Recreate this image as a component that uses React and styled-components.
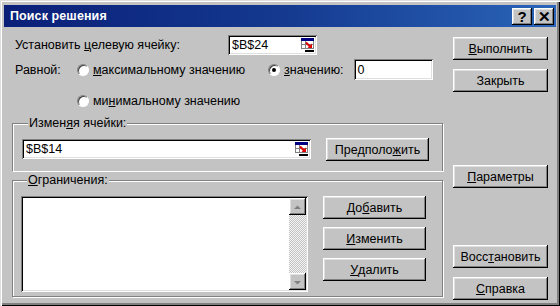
import React from 'react';
import styled, { createGlobalStyle } from 'styled-components';

const GlobalStyle = createGlobalStyle`
  html, body { margin: 0; padding: 0; background: #c0c0c0; }
  body {
    font-family: "Liberation Sans", Arial, sans-serif;
    font-size: 12.5px;
    color: #000;
  }
`;

const raised = `
  box-shadow: inset -1px -1px 0 #000, inset 1px 1px 0 #fff,
    inset -2px -2px 0 #808080, inset 2px 2px 0 #dfdfdf;
`;

const sunken = `
  box-shadow: inset 1px 1px 0 #808080, inset -1px -1px 0 #fff,
    inset 2px 2px 0 #000, inset -2px -2px 0 #dfdfdf;
`;

const Window = styled.div`
  width: 560px;
  height: 306px;
  box-sizing: border-box;
  background: #c3c3c3;
  padding: 5px 4px 0 4px;
  box-shadow: inset 1px 1px 0 #dfdfdf, inset 2px 2px 0 #fff,
    inset -1px -1px 0 #000, inset -3px -3px 0 #808080;
  display: flex;
  flex-direction: column;
`;

const TitleBar = styled.div`
  height: 22px;
  flex: none;
  display: flex;
  align-items: center;
  justify-content: space-between;
  padding: 0 2px 0 6px;
  background: linear-gradient(90deg, #0a1f78 0%, #14398f 50%, #2a64b8 100%);
`;

const Title = styled.span`
  color: #fff;
  font-weight: bold;
  font-size: 12.5px;
  letter-spacing: 0.1px;
`;

const TitleButtons = styled.div`
  display: flex;
  gap: 2px;
`;

const TitleButton = styled.div`
  width: 20px;
  height: 17px;
  background: #c3c3c3;
  ${raised}
  display: flex;
  align-items: center;
  justify-content: center;
  font-weight: bold;
  font-size: 15px;
  line-height: 1;
`;

const Body = styled.div`
  flex: 1;
  display: flex;
  padding: 8px 8px 0 8px;
`;

const LeftCol = styled.div`
  width: 431px;
  display: flex;
  flex-direction: column;
`;

const RightCol = styled.div`
  width: 95px;
  margin-left: 10px;
  padding-top: 2px;
  display: flex;
  flex-direction: column;
`;

const Row = styled.div`
  display: flex;
  align-items: center;
  height: ${p => p.$h || 20}px;
  margin-top: ${p => p.$mt || 0}px;
  padding-left: ${p => p.$pl || 0}px;
`;

const Label = styled.span`
  width: ${p => p.$w}px;
  padding-left: 3px;
  box-sizing: border-box;
  flex: none;
  white-space: nowrap;
`;

const TextBox = styled.div`
  width: ${p => p.$w}px;
  height: ${p => p.$h || 20}px;
  margin-left: ${p => p.$ml || 0}px;
  box-sizing: border-box;
  background: #fff;
  ${sunken}
  display: flex;
  align-items: center;
  justify-content: space-between;
  padding: 0 3px 0 4px;
  flex: none;
`;

const RadioOpt = styled.label`
  display: flex;
  align-items: center;
  gap: 4px;
  width: ${p => (p.$w ? `${p.$w}px` : 'auto')};
  flex: none;
  white-space: nowrap;
`;

const RadioDot = styled.span`
  width: 12px;
  height: 12px;
  border-radius: 50%;
  box-sizing: border-box;
  background: #fff;
  border: 1px solid;
  border-color: #808080 #fff #fff #808080;
  box-shadow: inset 1px 1px 0 #404040;
  display: flex;
  align-items: center;
  justify-content: center;
  &::after {
    content: '';
    width: 4px;
    height: 4px;
    border-radius: 50%;
    background: ${p => (p.$on ? '#000' : 'transparent')};
  }
`;

const Group = styled.fieldset`
  margin: ${p => p.$mt}px 0 0 0;
  padding: ${p => p.$pad};
  border: 1px solid #808080;
  border-bottom: ${p => (p.$open ? 'none' : '1px solid #808080')};
  box-shadow: inset 1px 1px 0 #fff, 1px 1px 0 #fff;
  min-width: 0;
  box-sizing: border-box;
  height: ${p => p.$h}px;
  display: flex;
  gap: 15px;
`;

const Legend = styled.legend`
  padding: 0 1px;
  margin-left: 6px;
  background: #c3c3c3;
  line-height: 16px;
`;

const Button = styled.div`
  width: ${p => p.$w || 95}px;
  height: ${p => p.$h || 23}px;
  margin-top: ${p => p.$mt || 0}px;
  box-sizing: border-box;
  background: #c3c3c3;
  ${raised}
  display: flex;
  align-items: center;
  justify-content: center;
  flex: none;
  white-space: nowrap;
`;

const ButtonCol = styled.div`
  display: flex;
  flex-direction: column;
`;

const ListBox = styled.div`
  width: 287px;
  height: 96px;
  box-sizing: border-box;
  background: #fff;
  ${sunken}
  padding: 2px;
  display: flex;
  justify-content: flex-end;
  flex: none;
`;

const ScrollBar = styled.div`
  width: 17px;
  display: flex;
  flex-direction: column;
`;

const ScrollBtn = styled.div`
  height: 17px;
  background: #c3c3c3;
  ${raised}
  display: flex;
  align-items: center;
  justify-content: center;
`;

const Track = styled.div`
  flex: 1;
  background-color: #e6e6e6;
  background-image: repeating-conic-gradient(#c3c3c3 0 25%, #f4f4f4 0 50%);
  background-size: 2px 2px;
`;

const RefIcon = () => (
  <svg width="13" height="15" viewBox="0 0 13 15">
    <rect x="0.5" y="0.5" width="12" height="10" fill="#fff" stroke="#808080" />
    <rect x="0" y="0" width="13" height="3" fill="#000080" />
    <line x1="4.5" y1="3" x2="4.5" y2="11" stroke="#808080" />
    <line x1="0" y1="6.5" x2="13" y2="6.5" stroke="#808080" />
    <path d="M5 4.5 L9 8.5" stroke="#e00000" strokeWidth="2" />
    <path d="M6.5 10 L11 10 L11 5.5 Z" fill="#e00000" />
    <rect x="4" y="12" width="9" height="2" fill="#000" />
  </svg>
);

const Arrow = ({ down }) => (
  <svg width="9" height="6" viewBox="0 0 9 6">
    <path
      d={down ? 'M1 2 L8 2 L4.5 5.5 Z' : 'M1 5 L8 5 L4.5 1.5 Z'}
      fill="#808080"
    />
  </svg>
);

export default function App() {
  return (
    <>
      <GlobalStyle />
      <Window>
        <TitleBar>
          <Title>Поиск решения</Title>
          <TitleButtons>
            <TitleButton>?</TitleButton>
            <TitleButton>✕</TitleButton>
          </TitleButtons>
        </TitleBar>
        <Body>
          <LeftCol>
            <Row>
              <Label $w={216}>
                Установить <u>ц</u>елевую ячейку:
              </Label>
              <TextBox $w={89}>
                <span>$B$24</span>
                <RefIcon />
              </TextBox>
            </Row>
            <Row $h={21} $mt={4}>
              <Label $w={65}>Равной:</Label>
              <RadioOpt $w={191}>
                <RadioDot />
                <span>
                  <u>м</u>аксимальному значению
                </span>
              </RadioOpt>
              <RadioOpt>
                <RadioDot $on />
                <span>
                  <u>з</u>начению:
                </span>
              </RadioOpt>
              <TextBox $w={79} $h={21} $ml={10}>
                <span>0</span>
              </TextBox>
            </Row>
            <Row $h={16} $mt={13} $pl={65}>
              <RadioOpt>
                <RadioDot />
                <span>
                  ми<u>н</u>имальному значению
                </span>
              </RadioOpt>
            </Row>
            <Group $mt={6} $h={56} $open $pad="7px 14px 0 9px">
              <Legend>
                Измен<u>я</u>я ячейки:
              </Legend>
              <TextBox $w={289} style={{ marginTop: 1 }}>
                <span>$B$14</span>
                <RefIcon />
              </TextBox>
              <Button $w={103}>
                Предполо<u>ж</u>ить
              </Button>
            </Group>
            <Group $mt={1} $h={125} $pad="8px 14px 0 8px">
              <Legend>
                <u>О</u>граничения:
              </Legend>
              <ListBox>
                <ScrollBar>
                  <ScrollBtn>
                    <Arrow />
                  </ScrollBtn>
                  <Track />
                  <ScrollBtn>
                    <Arrow down />
                  </ScrollBtn>
                </ScrollBar>
              </ListBox>
              <ButtonCol>
                <Button $w={103}>
                  До<u>б</u>авить
                </Button>
                <Button $w={103} $mt={8}>
                  <u>И</u>зменить
                </Button>
                <Button $w={103} $mt={8}>
                  <u>У</u>далить
                </Button>
              </ButtonCol>
            </Group>
          </LeftCol>
          <RightCol>
            <Button>
              <u>В</u>ыполнить
            </Button>
            <Button $mt={9}>Закрыть</Button>
            <Button $mt={73}>
              <u>П</u>араметры
            </Button>
            <Button $mt={57}>
              Восс<u>т</u>ановить
            </Button>
            <Button $mt={9}>
              <u>С</u>правка
            </Button>
          </RightCol>
        </Body>
      </Window>
    </>
  );
}
